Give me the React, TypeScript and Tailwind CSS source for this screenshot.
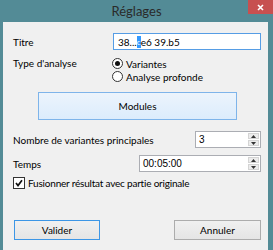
import React from "react";

function Spin({ value, width }: { value: string; width: string }) {
  return (
    <div className={`flex h-[17px] ${width} items-stretch border border-[#abadb3] bg-white`}>
      <div className="flex flex-1 items-center pl-[3px] font-['Liberation_Sans',sans-serif] text-[10px] leading-none text-black">
        {value}
      </div>
      <div className="flex w-[12px] flex-col justify-center gap-[1px] py-[1px] pr-[1px]">
        <div className="flex h-[6px] items-center justify-center border border-[#d4d4d4] bg-[#ececec]">
          <svg width="5" height="3" viewBox="0 0 5 3">
            <path d="M2.5 0 L5 3 L0 3 Z" fill="#333" />
          </svg>
        </div>
        <div className="flex h-[6px] items-center justify-center border border-[#d4d4d4] bg-[#ececec]">
          <svg width="5" height="3" viewBox="0 0 5 3">
            <path d="M0 0 L5 0 L2.5 3 Z" fill="#333" />
          </svg>
        </div>
      </div>
    </div>
  );
}

function Radio({ checked, label }: { checked?: boolean; label: string }) {
  return (
    <div className="flex h-[13px] items-center">
      <div className="flex h-[11px] w-[11px] items-center justify-center rounded-full border border-[#333] bg-white">
        {checked && <div className="h-[5px] w-[5px] rounded-full bg-[#111]" />}
      </div>
      <span className="ml-[3px] text-[10px] leading-none">{label}</span>
    </div>
  );
}

export default function App() {
  return (
    <div className="flex h-[250px] w-[273px] flex-col bg-[#538b96] font-['Lato','Noto_Sans',sans-serif] text-black">
      <div className="relative flex h-[22px] items-center justify-center">
        <span className="text-[13px] leading-none text-[#2a2a2a]">Réglages</span>
        <div className="absolute right-0 top-0 flex h-[14px] w-[25px] items-center justify-center bg-[#c75050]">
          <svg width="7" height="7" viewBox="0 0 7 7">
            <path d="M1 1 L6 6 M6 1 L1 6" stroke="#fff" strokeWidth="1.6" />
          </svg>
        </div>
      </div>
      <div className="ml-[3px] mr-[5px] flex flex-1 flex-col bg-[#f0f0f0] pl-[10px] pr-[7px]">
        {/* Titre */}
        <div className="mt-[11px] flex h-[17px] items-center">
          <span className="w-[100px] text-[10px] leading-none">Titre</span>
          <div className="flex h-[17px] flex-1 items-center border border-[#569de5] bg-white pl-[4px] text-[10px] leading-none">
            <span>38...</span>
            <span className="inline-flex h-[12px] w-[4px] items-center overflow-hidden bg-[#3399ff] text-[8px] text-white">c</span>
            <span>e6 39.b5</span>
          </div>
        </div>
        {/* Type d'analyse */}
        <div className="mt-[7px] flex">
          <span className="w-[99px] text-[10px] leading-[13px]">Type d'analyse</span>
          <div className="flex flex-col">
            <Radio checked label="Variantes" />
            <Radio label="Analyse profonde" />
          </div>
        </div>
        {/* Modules */}
        <div className="mt-[9px] ml-[25px] flex h-[28px] w-[199px] items-center justify-center border border-[#7eb4ea] bg-gradient-to-b from-[#ecf4fc] to-[#dcecfc] text-[10px] leading-none">
          Modules
        </div>
        {/* Nombre */}
        <div className="mt-[11px] flex h-[17px] items-center justify-between">
          <span className="text-[10px] leading-none">Nombre de variantes principales</span>
          <Spin value="3" width="w-[66px]" />
        </div>
        {/* Temps */}
        <div className="mt-[7px] flex h-[17px] items-center justify-between">
          <span className="text-[10px] leading-none">Temps</span>
          <Spin value="00:05:00" width="w-[122px]" />
        </div>
        {/* Checkbox */}
        <div className="mt-[4px] flex h-[13px] items-center">
          <div className="flex h-[12px] w-[12px] items-center justify-center border border-[#333] bg-white">
            <svg width="8" height="8" viewBox="0 0 8 8">
              <path d="M1 4 L3 6.5 L7 1.2" stroke="#111" strokeWidth="1.7" fill="none" />
            </svg>
          </div>
          <span className="ml-[3px] text-[10px] leading-none tracking-[-0.2px]">Fusionner résultat avec partie originale</span>
        </div>
        {/* Buttons */}
        <div className="mt-[31px] flex justify-between">
          <div className="ml-[1px] flex h-[20px] w-[86px] items-center justify-center border border-[#3c96e6] bg-gradient-to-b from-[#f0f0f0] to-[#e5e5e5] text-[10px] leading-none">
            Valider
          </div>
          <div className="flex h-[20px] w-[87px] items-center justify-center border border-[#acacac] bg-gradient-to-b from-[#f0f0f0] to-[#e5e5e5] text-[10px] leading-none">
            Annuler
          </div>
        </div>
      </div>
    </div>
  );
}
